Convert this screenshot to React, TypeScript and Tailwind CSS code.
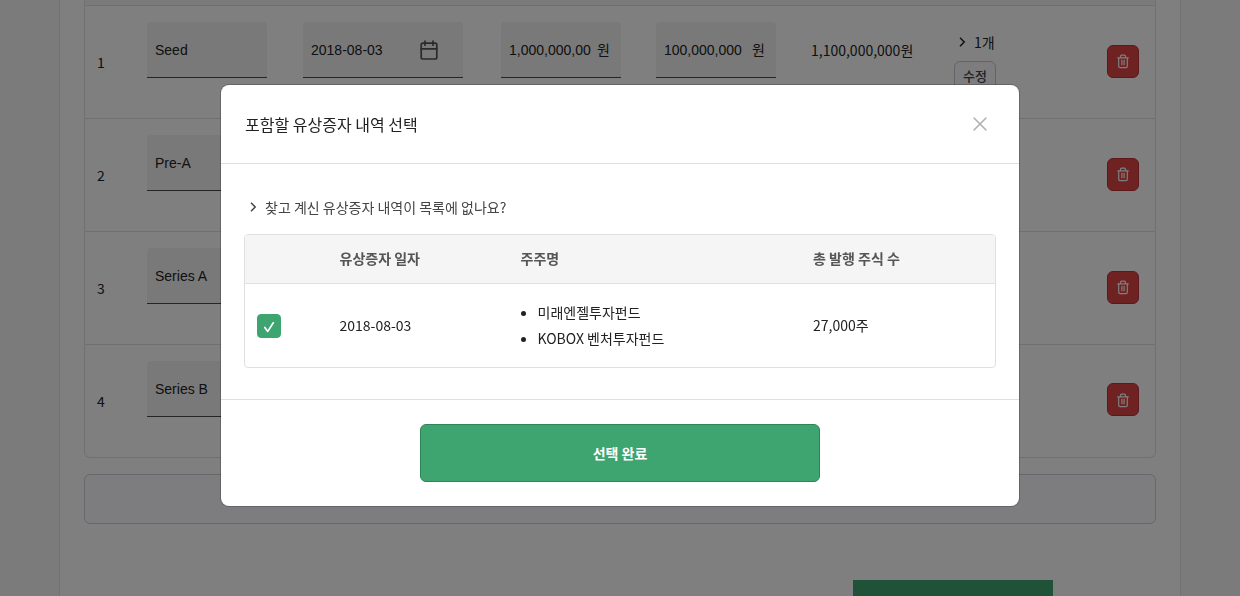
import {useState} from 'react';

type Round = {
    id: number;
    name: string;
    date: string;
    amount: string;
    price: string;
    total: string;
};

const rounds: Round[] = [
    {id: 1, name: 'Seed', date: '2018-08-03', amount: '1,000,000,00', price: '100,000,000', total: '1,100,000,000원'},
    {id: 2, name: 'Pre-A', date: '', amount: '', price: '', total: ''},
    {id: 3, name: 'Series A', date: '', amount: '', price: '', total: ''},
    {id: 4, name: 'Series B', date: '', amount: '', price: '', total: ''},
];

const shareholders = ['미래엔젤투자펀드', 'KOBOX 벤처투자펀드'];

const fieldClass =
    'flex h-14 items-center rounded-t border-b border-[#4a4a4a] bg-[#f3f3f3] px-2 pt-px font-[Liberation_Sans,Noto_Sans_CJK_KR,sans-serif]';

function ChevronIcon() {
    return (
        <svg className="size-4" viewBox="0 0 16 16" fill="none" stroke="currentColor" strokeWidth="1.5">
            <path d="M6 3.8 10.2 8 6 12.2"/>
        </svg>
    );
}

function CalendarIcon() {
    return (
        <svg className="size-6 text-[#555555]" viewBox="0 0 24 24" fill="none" stroke="currentColor" strokeWidth="1.7">
            <rect x="4.2" y="5.2" width="15.6" height="15.8" rx="1.8"/>
            <path d="M4.2 10.8h15.6M8 3v4.2M16 3v4.2" strokeLinecap="round"/>
        </svg>
    );
}

function TrashIcon() {
    return (
        <svg className="size-4" viewBox="0 0 16 16" fill="none" stroke="currentColor" strokeWidth="1.2">
            <path d="M2.3 4.9h11.4M5.5 4.7V3.2c0-.6.5-1.1 1.1-1.1h2.8c.6 0 1.1.5 1.1 1.1v1.5M3.7 5.1v8.2c0 .8.5 1.3 1.3 1.3h6c.8 0 1.3-.5 1.3-1.3V5.1M6.9 6.8v5.4M9.1 6.8v5.4"/>
        </svg>
    );
}

function MoneyField({label, value}: { label: string; value: string }) {
    return (
        <div className={`${fieldClass} w-30 gap-1`}>
            <input aria-label={label} defaultValue={value} className="w-21 outline-none"/>
            <span>원</span>
        </div>
    );
}

function RoundRow({round}: { round: Round }) {
    return (
        <tr className="h-[113px] border-t border-[#e0e0e0] last:h-28">
            <td className="px-3">{round.id}</td>
            <td className="px-3 pb-6">
                <div className={`${fieldClass} w-30`}>
                    <input aria-label={`${round.id} 라운드명`} defaultValue={round.name} className="w-full outline-none"/>
                </div>
            </td>
            <td className="px-3 pb-6">
                <div className={`${fieldClass} w-40 gap-1.5`}>
                    <input aria-label={`${round.id} 일자`} defaultValue={round.date} className="w-25 outline-none"/>
                    <CalendarIcon/>
                </div>
            </td>
            <td className="px-3 pb-6"><MoneyField label={`${round.id} 투자금액`} value={round.amount}/></td>
            <td className="px-3 pb-6"><MoneyField label={`${round.id} 가치`} value={round.price}/></td>
            <td className="px-3 pb-6">{round.total}</td>
            <td className="px-3">
                <button type="button" className="flex h-6 items-center gap-1">
                    <ChevronIcon/>
                    1개
                </button>
                <button
                    type="button"
                    className="mt-[7px] h-[33px] rounded-md border border-[#c8c8cc] bg-[#fafaff] px-2 pb-0.5 text-[13px] font-medium text-[#444444]"
                >
                    수정
                </button>
            </td>
            <td className="pr-4 pb-0.5 text-right">
                <button
                    type="button"
                    aria-label={`${round.id} 삭제`}
                    className="inline-flex h-[33px] w-8 items-center justify-center rounded-md border border-[#bd3038] bg-[#df4545] align-middle text-white"
                >
                    <TrashIcon/>
                </button>
            </td>
        </tr>
    );
}

function SelectDialog() {
    const [checked, setChecked] = useState(true);

    return (
        <div
            role="dialog"
            aria-modal="true"
            aria-labelledby="dialog-title"
            className="w-full max-w-[798px] rounded-lg bg-white ring-1 ring-black/20"
        >
            <header className="flex h-[79px] items-center justify-between border-b border-[#e0e0e0] px-6">
                <h2 id="dialog-title" className="text-base">포함할 유상증자 내역 선택</h2>
                <button type="button" aria-label="닫기" className="mr-[7px] text-[#b0b0b0]">
                    <svg className="size-4" viewBox="0 0 16 16" fill="none" stroke="currentColor" strokeWidth="1.6" strokeLinecap="round">
                        <path d="m2 2 12 12M14 2 2 14"/>
                    </svg>
                </button>
            </header>

            <div className="px-[23px] pt-8 pb-[31px]">
                <button type="button" className="mb-4 flex h-[22px] items-center gap-1 pl-px text-[#444444]">
                    <ChevronIcon/>
                    찾고 계신 유상증자 내역이 목록에 없나요?
                </button>
                <div className="overflow-hidden rounded border border-[#e0e0e0]">
                    <table className="w-full table-fixed text-left">
                        <thead className="bg-[#f5f5f5] text-[#555555]">
                            <tr className="h-12">
                                <th className="w-[11%] px-3"/>
                                <th className="w-[24%] px-3 pb-0.5 font-bold">유상증자 일자</th>
                                <th className="w-[39%] px-[13px] pb-0.5 font-bold">주주명</th>
                                <th className="px-[13px] pb-0.5 font-bold">총 발행 주식 수</th>
                            </tr>
                        </thead>
                        <tbody>
                            <tr className="border-t border-[#e0e0e0]">
                                <td className="px-3 pt-0.5">
                                    <label className="relative block size-6">
                                        <input
                                            type="checkbox"
                                            aria-label="2018-08-03 유상증자 선택"
                                            checked={checked}
                                            onChange={(e) => setChecked(e.target.checked)}
                                            className="block size-6 appearance-none rounded border border-[#3ea571] checked:bg-[#3ea571]"
                                        />
                                        <svg
                                            className="pointer-events-none absolute inset-0 size-6"
                                            viewBox="0 0 24 24"
                                            fill="none"
                                            stroke="white"
                                            strokeWidth="1.7"
                                            strokeLinecap="round"
                                            strokeLinejoin="round"
                                        >
                                            <path d="m7.8 13.4 3 4L16.3 8.8"/>
                                        </svg>
                                    </label>
                                </td>
                                <td className="px-3">2018-08-03</td>
                                <td className="px-[13px] pt-[15px] pb-4">
                                    <ul className="list-disc pl-[17px] leading-[26px]">
                                        {shareholders.map((name) => (
                                            <li key={name}>{name}</li>
                                        ))}
                                    </ul>
                                </td>
                                <td className="px-[13px]">27,000주</td>
                            </tr>
                        </tbody>
                    </table>
                </div>
            </div>

            <footer className="flex justify-center border-t border-[#e0e0e0] p-6">
                <button
                    type="button"
                    className="h-[58px] w-full max-w-100 rounded-md border border-[#2f855a] bg-[#3ea571] font-bold text-white"
                >
                    선택 완료
                </button>
            </footer>
        </div>
    );
}

export default function App() {
    return (
        <div className="h-screen overflow-hidden bg-[#f6f6f6] font-[Noto_Sans_CJK_KR,sans-serif] text-sm text-[#222222]">
            <main className="mx-auto min-h-screen max-w-[1122px] border-x border-[#e5e5e5] bg-white px-6">
                <div className="overflow-hidden rounded-b-md border-x border-b border-[#e0e0e0]">
                    <div className="h-[5px] bg-[#f5f5f5]"/>
                    <table className="w-full table-fixed text-left">
                        <colgroup>
                            <col className="w-[50px]"/>
                            <col className="w-[156px]"/>
                            <col className="w-[198px]"/>
                            <col className="w-[155px]"/>
                            <col className="w-[155px]"/>
                            <col className="w-[143px]"/>
                            <col/>
                            <col className="w-16"/>
                        </colgroup>
                        <tbody>
                            {rounds.map((round) => (
                                <RoundRow key={round.id} round={round}/>
                            ))}
                        </tbody>
                    </table>
                </div>
                <button
                    type="button"
                    aria-label="라운드 추가"
                    className="mt-4 block h-[50px] w-full rounded-md border border-[#cfcfd2] bg-[#fafaff]"
                />
                <div className="mt-14 flex justify-end pr-[103px]">
                    <button type="button" aria-label="저장" className="h-14 w-50 bg-[#3ea571]"/>
                </div>
            </main>

            <div className="fixed inset-0 flex items-start justify-center bg-black/50 pt-[85px]">
                <SelectDialog/>
            </div>
        </div>
    );
}
